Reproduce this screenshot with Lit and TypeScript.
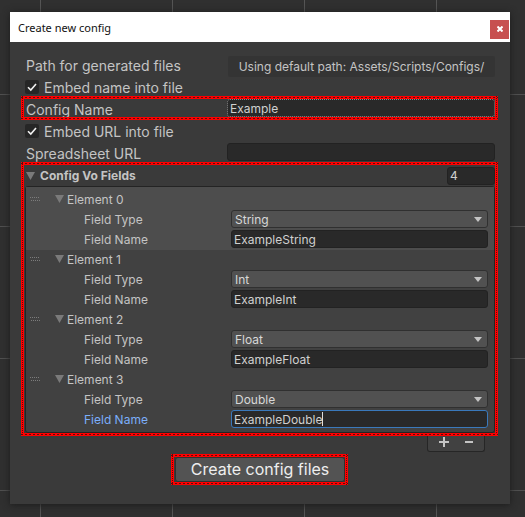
import { LitElement, html, css } from "lit";
import { customElement, state } from "lit/decorators.js";

interface Field {
  type: string;
  name: string;
}

const TYPES = ["String", "Int", "Float", "Double"];

@customElement("app-root")
export class AppRoot extends LitElement {
  @state() private fields: Field[] = [
    { type: "String", name: "ExampleString" },
    { type: "Int", name: "ExampleInt" },
    { type: "Float", name: "ExampleFloat" },
    { type: "Double", name: "ExampleDouble" },
  ];
  @state() private selected = 0;
  @state() private editing = 3;

  static styles = css`
    :host {
      display: block;
      font-family: Inter, "Liberation Sans", sans-serif;
      font-size: 12px;
      color: #c4c4c4;
    }
    * {
      box-sizing: border-box;
    }
    .backdrop {
      min-height: 100vh;
      padding: 12px 15px 14px 10px;
      border-bottom: 4px solid #212121;
      background-color: #303030;
      background-image: linear-gradient(90deg, #555 1px, transparent 1px),
        linear-gradient(#505050 1px, transparent 1px);
      background-size: 132px 132px;
      background-position: 40px 94px;
    }
    .window {
      background: #3a3a3a;
      box-shadow: 0 1px 7px #1c1c1c;
    }
    .titlebar {
      display: flex;
      align-items: center;
      justify-content: space-between;
      height: 30px;
      padding: 0 1px 0 8px;
      background: #fff;
      color: #111;
      font-family: "Noto Sans", "Open Sans", sans-serif;
    }
    .title {
      margin: 0;
      font-size: 11px;
      font-weight: 400;
    }
    .close {
      display: grid;
      place-items: center;
      width: 19px;
      height: 19px;
      margin-top: 8px;
      margin-bottom: 4px;
      padding: 0;
      border: 0;
      background: #c75050;
    }
    .body {
      display: flex;
      flex-direction: column;
      gap: 4px;
      padding: 13px 15px 22px;
    }
    .row {
      display: grid;
      grid-template-columns: 202px 1fr;
      height: 18px;
    }
    .label {
      padding-left: 1px;
      font-size: 14px;
      line-height: 22px;
      white-space: nowrap;
    }
    .check-row {
      display: flex;
      gap: 4px;
      height: 18px;
    }
    .check {
      appearance: none;
      display: grid;
      place-items: center;
      width: 14px;
      height: 14px;
      margin: 3px 0 0;
      border-radius: 2px;
      background: #262626 center / 10px 10px no-repeat;
    }
    .check:checked {
      background-image: url("data:image/svg+xml,%3Csvg xmlns='http://www.w3.org/2000/svg' viewBox='0 0 10 10'%3E%3Cpath d='M1 5.2 3.8 8 9 2' fill='none' stroke='%23f0f0f0' stroke-width='1.6'/%3E%3C/svg%3E");
    }
    .path {
      height: 21px;
      margin: 1px 0 0 1px;
      border-radius: 2px;
      background: #343434;
      line-height: 21px;
      text-align: center;
      white-space: nowrap;
    }
    .input {
      width: 100%;
      min-width: 0;
      height: 18px;
      padding: 0 2px;
      border: 1px solid #222;
      border-radius: 3px;
      outline: 0;
      background: #292929;
      color: #d0d0d0;
      font: inherit;
    }
    .outlined {
      border: 1px dotted #888;
    }
    .frame {
      position: relative;
    }
    .frame::after {
      content: "";
      position: absolute;
      inset: -3px -3px -3px -4px;
      pointer-events: none;
      --dots: repeating-linear-gradient(90deg, #5a0c0c 0 2px, #f00 2px 4px);
      --dots-v: repeating-linear-gradient(#5a0c0c 0 1px, #f00 1px 2px);
      background: var(--dots) 0 1px / 100% 1px no-repeat,
        var(--dots) 0 calc(100% - 1px) / 100% 1px no-repeat,
        var(--dots-v) 1px 0 / 1px 100% no-repeat,
        var(--dots-v) calc(100% - 1px) 0 / 1px 100% no-repeat,
        linear-gradient(#f00 0 0) 0 0 / 100% 3px no-repeat,
        linear-gradient(#f00 0 0) 0 100% / 100% 3px no-repeat,
        linear-gradient(#f00 0 0) 0 0 / 3px 100% no-repeat,
        linear-gradient(#f00 0 0) 100% 0 / 3px 100% no-repeat;
    }
    .header {
      display: flex;
      align-items: center;
      height: 21px;
      padding-left: 1px;
    }
    .foldout {
      display: flex;
      align-items: center;
      gap: 3px;
      padding: 0;
      border: 0;
      background: none;
      color: inherit;
      font: inherit;
    }
    .header .foldout {
      gap: 5px;
      font-weight: 700;
    }
    .arrow {
      width: 9px;
      height: 8px;
      fill: #7a7a7a;
    }
    .count {
      width: 48px;
      margin-left: auto;
    }
    .list {
      margin: 0;
      padding: 0 0 2px;
      border: 1px solid #242424;
      border-radius: 3px;
      background: #414141;
      list-style: none;
    }
    .item {
      padding-right: 6px;
    }
    .item:first-child {
      padding-top: 3px;
    }
    .item.selected {
      background: #4d4d4d;
    }
    .item-head {
      display: flex;
      align-items: center;
      gap: 15px;
      height: 20px;
      padding: 0 0 2px 4px;
    }
    .grip {
      width: 10px;
      height: 4px;
      fill: #7c7c7c;
    }
    .prop {
      display: grid;
      grid-template-columns: 205px 1fr;
      height: 20px;
    }
    .prop-label {
      padding-left: 58px;
      line-height: 20px;
    }
    .prop-label.active {
      color: #7baefa;
    }
    .pick {
      position: relative;
    }
    .select {
      appearance: none;
      display: block;
      width: 100%;
      height: 18px;
      padding: 0 20px 0 3px;
      border: 1px solid #303030;
      border-radius: 3px;
      background: #515151;
      color: #d8d8d8;
      font: inherit;
      line-height: 15px;
    }
    .caret-down {
      position: absolute;
      top: 7px;
      right: 6px;
      width: 8px;
      height: 5px;
      fill: #c4c4c4;
      pointer-events: none;
    }
    .edit {
      display: flex;
      align-items: center;
      height: 18px;
      padding: 0 2px;
      border: 1px solid #3a79bb;
      border-radius: 3px;
      background: #292929;
    }
    .edit-input {
      field-sizing: content;
      padding: 0;
      border: 0;
      outline: 0;
      background: none;
      color: #d0d0d0;
      font: inherit;
    }
    .text-cursor {
      width: 1px;
      height: 14px;
      background: #ddd;
    }
    .list-footer {
      display: flex;
      justify-content: space-around;
      align-items: center;
      width: 58px;
      height: 19px;
      margin: -4px 10px 0 auto;
      padding: 0 3px;
      border: 1px solid #262626;
      border-top: 0;
      border-radius: 0 0 3px 3px;
      background: #414141;
    }
    .tool {
      display: grid;
      padding: 0;
      border: 0;
      background: none;
    }
    .submit-row {
      display: flex;
      justify-content: center;
      margin-top: 1px;
    }
    .submit {
      height: 25px;
      padding: 0 15px;
      border: 1px solid #303030;
      border-radius: 3px;
      background: #535353;
      color: #eee;
      font-family: inherit;
      font-size: 16px;
      line-height: 23px;
    }
  `;

  private resize(delta: number) {
    this.fields =
      delta > 0
        ? [...this.fields, { type: "String", name: "" }]
        : this.fields.slice(0, -1);
  }

  private arrow() {
    return html`<svg class="arrow" viewBox="0 0 9 8" aria-hidden="true">
      <path d="M0 0h9L4.5 8z" />
    </svg>`;
  }

  private nameInput(f: Field, i: number) {
    if (i !== this.editing) {
      return html`<input
        class="input"
        id="name-${i}"
        .value=${f.name}
        @focus=${() => (this.selected = i)}
      />`;
    }
    return html`<div class="edit">
      <input class="edit-input" id="name-${i}" .value=${f.name} />
      <span class="text-cursor"></span>
    </div>`;
  }

  private item(f: Field, i: number) {
    return html`<li class="item ${i === this.selected ? "selected" : ""}">
      <div class="item-head">
        <svg class="grip" viewBox="0 0 10 4" aria-hidden="true">
          <path
            d="M0 0h1v1H0zM2 0h1v1H2zM4 0h1v1H4zM6 0h1v1H6zM8 0h1v1H8zM1 3h1v1H1zM3 3h1v1H3zM5 3h1v1H5zM7 3h1v1H7zM9 3h1v1H9z"
          />
        </svg>
        <button class="foldout" type="button">
          ${this.arrow()}<span>Element ${i}</span>
        </button>
      </div>
      <div class="prop">
        <label class="prop-label" for="type-${i}">Field Type</label>
        <div class="pick">
          <select class="select" id="type-${i}">
            ${TYPES.map(
              (t) => html`<option ?selected=${t === f.type}>${t}</option>`
            )}
          </select>
          <svg class="caret-down" viewBox="0 0 8 5" aria-hidden="true">
            <path d="M0 0h8L4 5z" />
          </svg>
        </div>
      </div>
      <div class="prop">
        <label
          class="prop-label ${i === this.editing ? "active" : ""}"
          for="name-${i}"
          >Field Name</label
        >
        ${this.nameInput(f, i)}
      </div>
    </li>`;
  }

  render() {
    return html`<div class="backdrop">
      <main class="window">
        <header class="titlebar">
          <h1 class="title">Create new config</h1>
          <button class="close" type="button" aria-label="Close">
            <svg width="6" height="6" viewBox="0 0 6 6" aria-hidden="true">
              <path d="M.5.5l5 5M5.5.5l-5 5" stroke="#fff" stroke-width="2" />
            </svg>
          </button>
        </header>
        <form class="body" @submit=${(e: Event) => e.preventDefault()}>
          <div class="row">
            <span class="label">Path for generated files</span>
            <div class="path">Using default path: Assets/Scripts/Configs/</div>
          </div>
          <div class="check-row">
            <input class="check" id="embed-name" type="checkbox" checked />
            <label class="label" for="embed-name">Embed name into file</label>
          </div>
          <div class="row frame">
            <label class="label" for="config-name">Config Name</label>
            <input class="input outlined" id="config-name" value="Example" />
          </div>
          <div class="check-row">
            <input class="check" id="embed-url" type="checkbox" checked />
            <label class="label" for="embed-url">Embed URL into file</label>
          </div>
          <div class="row">
            <label class="label" for="sheet-url">Spreadsheet URL</label>
            <input class="input" id="sheet-url" />
          </div>
          <section class="frame">
            <div class="header">
              <button class="foldout" type="button">
                ${this.arrow()}<span>Config Vo Fields</span>
              </button>
              <input
                class="input count"
                aria-label="Number of fields"
                .value=${String(this.fields.length)}
              />
            </div>
            <ul class="list">
              ${this.fields.map((f, i) => this.item(f, i))}
            </ul>
          </section>
          <div class="list-footer">
            <button
              class="tool"
              type="button"
              aria-label="Add field"
              @click=${() => this.resize(1)}
            >
              <svg width="10" height="10" viewBox="0 0 10 10">
                <path d="M4 0h2v4h4v2H6v4H4V6H0V4h4z" fill="#c4c4c4" />
              </svg>
            </button>
            <button
              class="tool"
              type="button"
              aria-label="Remove field"
              @click=${() => this.resize(-1)}
            >
              <svg width="8" height="10" viewBox="0 0 8 10">
                <path d="M0 4h8v2H0z" fill="#c4c4c4" />
              </svg>
            </button>
          </div>
          <div class="submit-row">
            <div class="frame">
              <button class="submit" type="submit">Create config files</button>
            </div>
          </div>
        </form>
      </main>
    </div>`;
  }
}
